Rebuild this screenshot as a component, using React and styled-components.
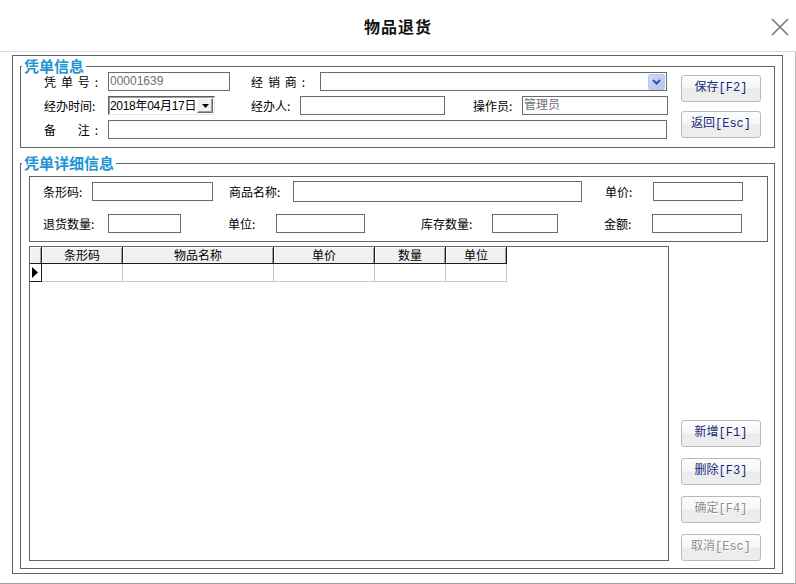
import React from 'react';
import styled, { createGlobalStyle } from 'styled-components';

const Global = createGlobalStyle`
  html, body { margin: 0; padding: 0; background: #fff; }
  body {
    width: 796px; height: 584px; overflow: hidden;
    font-family: "Noto Sans CJK SC", "Liberation Sans", sans-serif;
    font-size: 12px; color: #000;
  }
  * { box-sizing: border-box; }
`;

const Dialog = styled.div`
  width: 796px; height: 584px;
  display: flex; flex-direction: column;
  background: #fff;
`;

const TitleBar = styled.header`
  flex: none; height: 52px;
  display: grid; grid-template-columns: 1fr auto 1fr; align-items: center;
  border-bottom: 1px solid #d9d9d9;
`;

const Title = styled.h1`
  grid-column: 2; margin: 0;
  font-size: 16px; font-weight: bold; letter-spacing: 1px;
  line-height: 20px; color: #111;
`;

const CloseBtn = styled.button`
  grid-column: 3; justify-self: end;
  width: 18px; height: 18px; padding: 0; margin: 2px 7px 0 0;
  border: none; background: transparent; display: flex;
`;

const Body = styled.main`
  flex: 1;
  border-right: 1px solid #b8b8b8;
  border-bottom: 1px solid #a3a3a3;
  padding: 3px 12px 9px 12px;
  display: flex;
`;

const Frame = styled.div`
  flex: 1;
  border: 1px solid #646464;
  padding: 10px 7px 4px 7px;
  display: flex; flex-direction: column; gap: 15px;
`;

const GroupBox = styled.section`
  position: relative;
  border: 1px solid #646464;
  flex: ${p => (p.$grow ? '1' : 'none')};
  height: ${p => (p.$h ? `${p.$h}px` : 'auto')};
  display: flex;
  flex-direction: ${p => (p.$col ? 'column' : 'row')};
  padding: ${p => p.$pad || '0'};
  gap: ${p => p.$gap || 0}px;
`;

const Legend = styled.span`
  position: absolute; left: 1px; top: -9px;
  padding: 0 2px; background: #fff;
  color: #1d95d4; font-weight: bold; font-size: 15px; line-height: 15px;
  white-space: nowrap;
`;

const FieldsArea = styled.div`
  flex: none; width: 647px;
  padding: 5px 0 0 23px;
  display: flex; flex-direction: column; gap: 5px;
`;

const ButtonCol = styled.div`
  flex: none; width: 80px;
  margin-left: ${p => p.$ml || 0}px;
  padding-top: ${p => p.$pt || 0}px;
  display: flex; flex-direction: column;
  justify-content: ${p => (p.$end ? 'flex-end' : 'flex-start')};
  gap: ${p => p.$gap || 9}px;
`;

const Row = styled.div`
  display: flex; align-items: center;
  height: ${p => p.$h || 19}px;
`;

const Label = styled.span`
  flex: none; width: ${p => p.$w}px;
  margin-left: ${p => p.$ml || 0}px;
  white-space: nowrap; line-height: 14px;
`;

const Spread = styled.span`
  display: flex; justify-content: space-between;
  width: 54px;
`;

const Blank = styled.span`
  display: inline-block; width: 12px;
`;

const TextBox = styled.div`
  flex: none;
  width: ${p => p.$w}px; height: ${p => p.$h || 19}px;
  margin-left: ${p => p.$ml || 0}px;
  border: 1px solid #6b6b6b; background: #fff;
  color: #6f6f6f; padding-left: 1px;
  font-family: "Liberation Sans", "Noto Sans CJK SC", sans-serif;
  line-height: 17px; white-space: nowrap; overflow: hidden;
`;

const Combo = styled(TextBox)`
  display: flex; align-items: center; justify-content: flex-end;
  padding: 0 1px 0 0;
`;

const ComboBtn = styled.span`
  width: 17px; height: 16px; border-radius: 2px;
  background: linear-gradient(135deg, #d4dafd 0%, #c3cbf6 50%, #b4c6f0 100%);
  border: 1px solid #bcc6f2;
  display: flex; align-items: center; justify-content: center;
`;

const DateBox = styled.div`
  flex: none; width: 107px; height: 19px;
  border: 1px solid; border-color: #5f5f5f #e6e6e6 #e6e6e6 #5f5f5f;
  box-shadow: inset 1px 1px 0 #a0a0a0;
  display: flex; align-items: center; justify-content: space-between;
  padding: 0 1px 0 1px; background: #fff;
`;

const DateText = styled.span`
  font-family: "Liberation Sans", "Noto Sans CJK SC", sans-serif;
  letter-spacing: -0.3px; line-height: 16px; white-space: nowrap;
`;

const DateBtn = styled.span`
  flex: none; width: 16px; height: 15px;
  background: #f0f0f0;
  border: 1px solid; border-color: #fff #696969 #696969 #fff;
  box-shadow: inset -1px -1px 0 #a0a0a0;
  display: flex; align-items: center; justify-content: center;
`;

const Btn = styled.button`
  width: 80px; height: 27px; padding: 0 0 2px 0;
  border: 1px solid #b9b9b9; border-radius: 3px;
  background: linear-gradient(#fdfdfd 0%, #f6f6f6 48%, #ebebeb 52%, #eeeeee 100%);
  color: ${p => (p.disabled ? '#8e8e8e' : '#16267a')};
  text-shadow: ${p => (p.disabled ? '1px 1px 0 #fff' : 'none')};
  font-family: "Liberation Mono", "Noto Sans CJK SC", monospace;
  font-size: 12px; line-height: 16px;
`;

const Panel = styled.div`
  flex: none; height: 66px;
  border: 1px solid #646464;
  padding: 4px 0 0 13px;
  display: flex; flex-direction: column; gap: 12px;
`;

const Bottom = styled.div`
  flex: 1; display: flex;
`;

const GridBox = styled.div`
  flex: none; width: 640px;
  border: 1px solid #646464; background: #fff;
  margin-right: 12px;
`;

const GridTable = styled.div`
  display: grid;
  grid-template-columns: 12px 81px 151px 101px 71px 61px;
  grid-template-rows: 17px 18px;
  width: max-content;
`;

const HeadCell = styled.div`
  background: #f0f0f0;
  border-right: 1px solid #1c1c1c; border-bottom: 1px solid #1c1c1c;
  box-shadow: inset 1px 1px 0 #fff, inset -1px 0 0 #a0a0a0;
  text-align: center; line-height: 16px; white-space: nowrap;
`;

const RowHead = styled.div`
  background: #fff;
  border-right: 1px solid #1c1c1c; border-bottom: 1px solid #1c1c1c;
  display: flex; align-items: center; justify-content: flex-start;
  padding-left: 2px;
`;

const Cell = styled.div`
  border-right: 1px solid #c6c6c6; border-bottom: 1px solid #c6c6c6;
`;

const SpreadLabel = ({ chars, w, ml }) => (
  <Label $w={w} $ml={ml}>
    <Spread>
      {chars.map((c, i) => (c === ' ' ? <Blank key={i} /> : <span key={i}>{c}</span>))}
    </Spread>
  </Label>
);

const columns = ['条形码', '物品名称', '单价', '数量', '单位'];

export default function App() {
  return (
    <>
      <Global />
      <Dialog>
        <TitleBar>
          <Title>物品退货</Title>
          <CloseBtn aria-label="关闭">
            <svg width="18" height="18" viewBox="0 0 18 18">
              <path d="M1 1 L17 17 M17 1 L1 17" stroke="#7c7c7c" strokeWidth="1.7" fill="none" />
            </svg>
          </CloseBtn>
        </TitleBar>
        <Body>
          <Frame>
            <GroupBox $h={82}>
              <Legend>凭单信息</Legend>
              <FieldsArea>
                <Row>
                  <SpreadLabel chars={['凭', '单', '号', ':']} w={64} />
                  <TextBox $w={122}>00001639</TextBox>
                  <SpreadLabel chars={['经', '销', '商', ':']} w={69} ml={21} />
                  <Combo $w={347}>
                    <ComboBtn>
                      <svg width="9" height="6" viewBox="0 0 9 6">
                        <path d="M1 1 L4.5 4.5 L8 1" stroke="#2f5596" strokeWidth="2" fill="none" />
                      </svg>
                    </ComboBtn>
                  </Combo>
                </Row>
                <Row>
                  <Label $w={64}>经办时间:</Label>
                  <DateBox>
                    <DateText>2018年04月17日</DateText>
                    <DateBtn>
                      <svg width="7" height="4" viewBox="0 0 7 4">
                        <path d="M0 0 H7 L3.5 4 Z" fill="#000" />
                      </svg>
                    </DateBtn>
                  </DateBox>
                  <Label $w={49} $ml={36}>经办人:</Label>
                  <TextBox $w={145} />
                  <Label $w={49} $ml={28}>操作员:</Label>
                  <TextBox $w={146}>管理员</TextBox>
                </Row>
                <Row>
                  <SpreadLabel chars={['备', ' ', '注', ':']} w={64} />
                  <TextBox $w={559} />
                </Row>
              </FieldsArea>
              <ButtonCol $ml={13} $pt={8} $gap={9}>
                <Btn>保存[F2]</Btn>
                <Btn>返回[Esc]</Btn>
              </ButtonCol>
            </GroupBox>

            <GroupBox $grow $col $pad="12px 6px 7px 8px" $gap={4}>
              <Legend>凭单详细信息</Legend>
              <Panel>
                <Row $h={21}>
                  <Label $w={49}>条形码:</Label>
                  <TextBox $w={121} />
                  <Label $w={64} $ml={16}>商品名称:</Label>
                  <TextBox $w={289} $h={21} />
                  <Label $w={48} $ml={23}>单价:</Label>
                  <TextBox $w={90} />
                </Row>
                <Row>
                  <Label $w={65}>退货数量:</Label>
                  <TextBox $w={73} />
                  <Label $w={48} $ml={47}>单位:</Label>
                  <TextBox $w={89} />
                  <Label $w={71} $ml={56}>库存数量:</Label>
                  <TextBox $w={66} />
                  <Label $w={48} $ml={46}>金额:</Label>
                  <TextBox $w={90} />
                </Row>
              </Panel>
              <Bottom>
                <GridBox>
                  <GridTable>
                    <HeadCell />
                    {columns.map(c => (
                      <HeadCell key={c}>{c}</HeadCell>
                    ))}
                    <RowHead>
                      <svg width="6" height="11" viewBox="0 0 6 11">
                        <path d="M0 0 L6 5.5 L0 11 Z" fill="#000" />
                      </svg>
                    </RowHead>
                    {columns.map(c => (
                      <Cell key={c} />
                    ))}
                  </GridTable>
                </GridBox>
                <ButtonCol $end $gap={11}>
                  <Btn>新增[F1]</Btn>
                  <Btn>删除[F3]</Btn>
                  <Btn disabled>确定[F4]</Btn>
                  <Btn disabled>取消[Esc]</Btn>
                </ButtonCol>
              </Bottom>
            </GroupBox>
          </Frame>
        </Body>
      </Dialog>
    </>
  );
}
